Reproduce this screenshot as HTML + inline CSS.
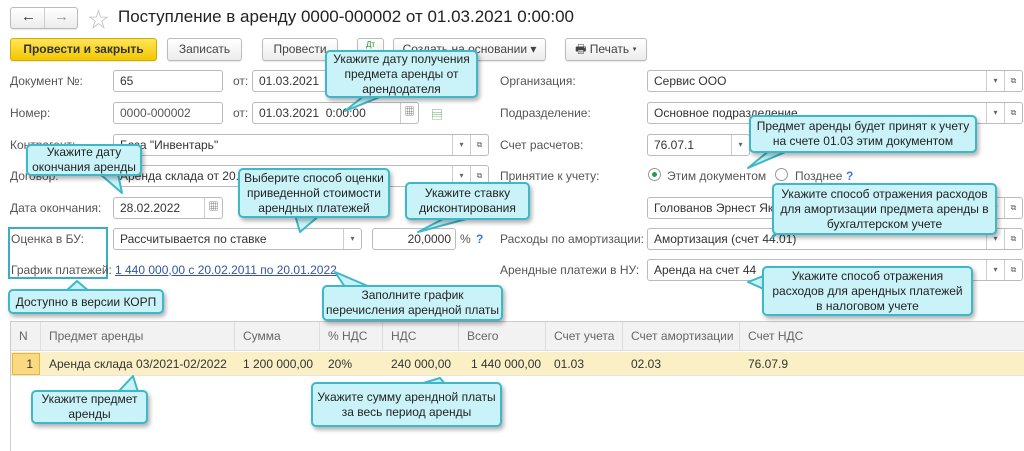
<!DOCTYPE html>
<html><head><meta charset="utf-8"><style>
*{box-sizing:border-box;margin:0;padding:0}
body{width:1024px;height:444px;overflow:hidden;background:#fff;font-family:"Liberation Sans","Noto Sans CJK SC",sans-serif;font-size:12px;color:#333;position:relative}
.a{position:absolute;white-space:nowrap}
.lbl{position:absolute;color:#555;font-size:12px;white-space:nowrap}
.inp{position:absolute;height:22px;border:1px solid #bbb;border-radius:3px;background:#fff;padding:3px 0 0 6px;white-space:nowrap;overflow:hidden;color:#333}
.dd{position:absolute;top:0;width:18px;height:20px;border-left:1px solid #ccc;font-size:8px;color:#666;text-align:center;line-height:20px}
.btn{position:absolute;height:23px;border:1px solid #bbb;border-radius:3px;background:linear-gradient(#fff,#ececec);text-align:center;line-height:21px;color:#444;font-size:12px;white-space:nowrap;box-shadow:0 1px 1px rgba(0,0,0,.1)}
.co{position:absolute;background:#c9f3f8;border:2px solid #3eb7c8;border-radius:5px;text-align:center;color:#222;font-size:12px;line-height:14px;box-shadow:2px 3px 4px rgba(0,0,0,.3);display:flex;align-items:center;justify-content:center;white-space:nowrap}
.th{position:absolute;top:322px;height:28px;line-height:28px;color:#666;border-right:1px solid #ddd;padding-left:8px}
.td{position:absolute;top:352px;height:24px;line-height:24px;color:#333;padding-left:8px}
</style></head><body>
<div class="btn" style="left:10px;top:7px;width:68px;height:22px"></div>
<div class="a" style="left:44px;top:8px;width:1px;height:20px;background:#ccc"></div>
<div class="a" style="left:21px;top:8px;font-size:15px;font-weight:bold;color:#333">&#8592;</div>
<div class="a" style="left:54px;top:8px;font-size:15px;font-weight:bold;color:#999">&#8594;</div>
<div class="a" style="left:88px;top:4px;font-size:21px;color:#bbb">&#9734;</div>
<div class="a" style="left:118px;top:7px;font-size:17px;color:#222">Поступление в аренду 0000-000002 от 01.03.2021 0:00:00</div>
<div class="btn" style="left:10px;top:38px;width:147px;background:linear-gradient(#ffe55a,#f2c800);border-color:#d2ad00;font-weight:bold;color:#333">Провести и закрыть</div>
<div class="btn" style="left:167px;top:38px;width:75px">Записать</div>
<div class="btn" style="left:262px;top:38px;width:76px">Провести</div>
<div class="btn" style="left:357px;top:38px;width:27px;font-size:8px;color:#2a8a2a;line-height:12px">Дт</div>
<div class="btn" style="left:393px;top:38px;width:153px">Создать на основании ▾</div>
<div class="btn" style="left:565px;top:38px;width:82px">🖶 Печать ▾</div>
<div class="lbl" style="left:10px;top:74px">Документ №:</div>
<div class="inp" style="left:113px;top:70px;width:110px">65</div>
<div class="lbl" style="left:233px;top:74px">от:</div>
<div class="inp" style="left:252px;top:70px;width:90px">01.03.2021</div>
<div class="lbl" style="left:10px;top:106px">Номер:</div>
<div class="inp" style="left:113px;top:102px;width:110px;color:#555">0000-000002</div>
<div class="lbl" style="left:233px;top:106px">от:</div>
<div class="inp" style="left:252px;top:102px;width:167px">01.03.2021 &nbsp;0:00:00<div class="dd" style="right:0;font-size:10px">▦</div></div>
<div class="a" style="left:431px;top:106px;color:#6a6;font-size:12px">▤</div>
<div class="lbl" style="left:10px;top:138px">Контрагент:</div>
<div class="inp" style="left:113px;top:134px;width:376px">База "Инвентарь"<div class="dd" style="right:18px">▾</div><div class="dd" style="right:0">⧉</div></div>
<div class="lbl" style="left:10px;top:169px">Договор:</div>
<div class="inp" style="left:113px;top:165px;width:376px">Аренда склада от 20.02.2021<div class="dd" style="right:18px">▾</div><div class="dd" style="right:0">⧉</div></div>
<div class="lbl" style="left:10px;top:201px">Дата окончания:</div>
<div class="inp" style="left:113px;top:197px;width:110px">28.02.2022<div class="dd" style="right:0;font-size:10px">▦</div></div>
<div class="a" style="left:8px;top:227px;width:100px;height:52px;border:2px solid #3aaec8"></div>
<div class="lbl" style="left:11px;top:232px">Оценка в БУ:</div>
<div class="inp" style="left:113px;top:228px;width:249px">Рассчитывается по ставке<div class="dd" style="right:0">▾</div></div>
<div class="inp" style="left:372px;top:228px;width:84px;text-align:right;padding-right:4px">20,0000</div>
<div class="lbl" style="left:460px;top:232px">%</div>
<div class="a" style="left:476px;top:232px;color:#3a7bd5;font-weight:bold">?</div>
<div class="lbl" style="left:11px;top:263px">График платежей:</div>
<div class="a" style="left:115px;top:263px;color:#3454a8;text-decoration:underline">1 440 000,00 с 20.02.2011 по 20.01.2022</div>
<div class="lbl" style="left:500px;top:74px">Организация:</div>
<div class="inp" style="left:647px;top:70px;width:376px">Сервис ООО<div class="dd" style="right:18px">▾</div><div class="dd" style="right:0">⧉</div></div>
<div class="lbl" style="left:500px;top:106px">Подразделение:</div>
<div class="inp" style="left:647px;top:102px;width:376px">Основное подразделение<div class="dd" style="right:18px">▾</div><div class="dd" style="right:0">⧉</div></div>
<div class="lbl" style="left:500px;top:138px">Счет расчетов:</div>
<div class="inp" style="left:647px;top:134px;width:103px">76.07.1<div class="dd" style="right:0">▾</div></div>
<div class="lbl" style="left:500px;top:169px">Принятие к учету:</div>
<div class="a" style="left:648px;top:168px;width:13px;height:13px;border:1px solid #999;border-radius:50%"></div>
<div class="a" style="left:652px;top:172px;width:5px;height:5px;background:#2a9a4a;border-radius:50%"></div>
<div class="lbl" style="left:667px;top:169px">Этим документом</div>
<div class="a" style="left:775px;top:168px;width:13px;height:13px;border:1px solid #999;border-radius:50%"></div>
<div class="lbl" style="left:795px;top:169px">Позднее</div>
<div class="a" style="left:846px;top:169px;color:#3a7bd5;font-weight:bold">?</div>
<div class="inp" style="left:647px;top:197px;width:376px">Голованов Эрнест Яковлевич<div class="dd" style="right:18px">▾</div><div class="dd" style="right:0">⧉</div></div>
<div class="lbl" style="left:500px;top:232px">Расходы по амортизации:</div>
<div class="inp" style="left:647px;top:228px;width:376px">Амортизация (счет 44.01)<div class="dd" style="right:18px">▾</div><div class="dd" style="right:0">⧉</div></div>
<div class="lbl" style="left:500px;top:263px">Арендные платежи в НУ:</div>
<div class="inp" style="left:647px;top:259px;width:376px">Аренда на счет 44<div class="dd" style="right:18px">▾</div><div class="dd" style="right:0">⧉</div></div>
<div class="a" style="left:10px;top:321px;width:1014px;height:130px;border:1px solid #ccc;border-right:none;border-bottom:none"></div>
<div class="a" style="left:11px;top:322px;width:1013px;height:29px;background:#f2f2f2;border-bottom:1px solid #ddd"></div>
<div class="a" style="left:11px;top:352px;width:1013px;height:24px;background:#fbefc5;border-bottom:1px solid #e5e5e5"></div>
<div class="th" style="left:11px;width:30px">N</div>
<div class="th" style="left:41px;width:194px">Предмет аренды</div>
<div class="th" style="left:235px;width:85px">Сумма</div>
<div class="th" style="left:320px;width:63px">% НДС</div>
<div class="th" style="left:383px;width:76px">НДС</div>
<div class="th" style="left:459px;width:87px">Всего</div>
<div class="th" style="left:546px;width:77px">Счет учета</div>
<div class="th" style="left:623px;width:117px">Счет амортизации</div>
<div class="th" style="left:740px;width:200px;border:none">Счет НДС</div>
<div class="a" style="left:12px;top:353px;width:28px;height:22px;background:#fbd983;border:1px solid #e6b73a;text-align:right;padding-right:6px;line-height:20px">1</div>
<div class="td" style="left:41px">Аренда склада 03/2021-02/2022</div>
<div class="td" style="left:235px">1 200 000,00</div>
<div class="td" style="left:320px">20%</div>
<div class="td" style="left:383px;padding-left:8px">240 000,00</div>
<div class="td" style="left:459px;padding-left:12px">1 440 000,00</div>
<div class="td" style="left:546px">01.03</div>
<div class="td" style="left:623px">02.03</div>
<div class="td" style="left:740px">76.07.9</div>
<svg class="a" style="left:0;top:0;z-index:5" width="1024" height="444">
<g fill="#c9f3f8" stroke="#3eb7c8" stroke-width="2" stroke-linejoin="round">
<polygon points="365,95 345,111 385,95"/>
<polygon points="100,174 122,193 118,174"/>
<polygon points="295,215 300,232 320,215"/>
<polygon points="445,218 418,232 470,218"/>
<polygon points="770,150 748,168 790,150"/>
<polygon points="790,220 772,238 800,205"/>
<polygon points="65,292 77,281 90,292"/>
<polygon points="345,287 335,272 370,287"/>
<polygon points="766,290 748,282 766,275"/>
<polygon points="118,392 133,376 138,392"/>
<polygon points="420,384 440,378 445,384"/>
</g></svg>
<div class="co" style="left:325px;top:50px;width:153px;height:48px;z-index:6;line-height:15px">Укажите дату получения<br>предмета аренды от<br>арендодателя</div>
<div class="co" style="left:26px;top:144px;width:116px;height:32px;z-index:6;line-height:15px">Укажите дату<br>окончания аренды</div>
<div class="co" style="left:238px;top:168px;width:152px;height:50px;z-index:6;line-height:15px">Выберите способ оценки<br>приведенной стоимости<br>арендных платежей</div>
<div class="co" style="left:405px;top:182px;width:125px;height:38px;z-index:6;line-height:15px">Укажите ставку<br>дисконтирования</div>
<div class="co" style="left:749px;top:115px;width:228px;height:38px;z-index:6;line-height:15px">Предмет аренды будет принят к учету<br>на счете 01.03 этим документом</div>
<div class="co" style="left:772px;top:183px;width:225px;height:52px;z-index:6;line-height:15px">Укажите способ отражения расходов<br>для амортизации предмета аренды в<br>бухгалтерском учете</div>
<div class="co" style="left:8px;top:289px;width:156px;height:25px;z-index:6">Доступно в версии КОРП</div>
<div class="co" style="left:322px;top:285px;width:181px;height:36px;z-index:6;line-height:15px">Заполните график<br>перечисления арендной платы</div>
<div class="co" style="left:762px;top:266px;width:211px;height:50px;z-index:6;line-height:15px">Укажите способ отражения<br>расходов для арендных платежей<br>в налоговом учете</div>
<div class="co" style="left:31px;top:390px;width:117px;height:34px;z-index:6;line-height:15px">Укажите предмет<br>аренды</div>
<div class="co" style="left:311px;top:382px;width:191px;height:45px;z-index:6;line-height:15px">Укажите сумму арендной платы<br>за весь период аренды</div>
</body></html>
